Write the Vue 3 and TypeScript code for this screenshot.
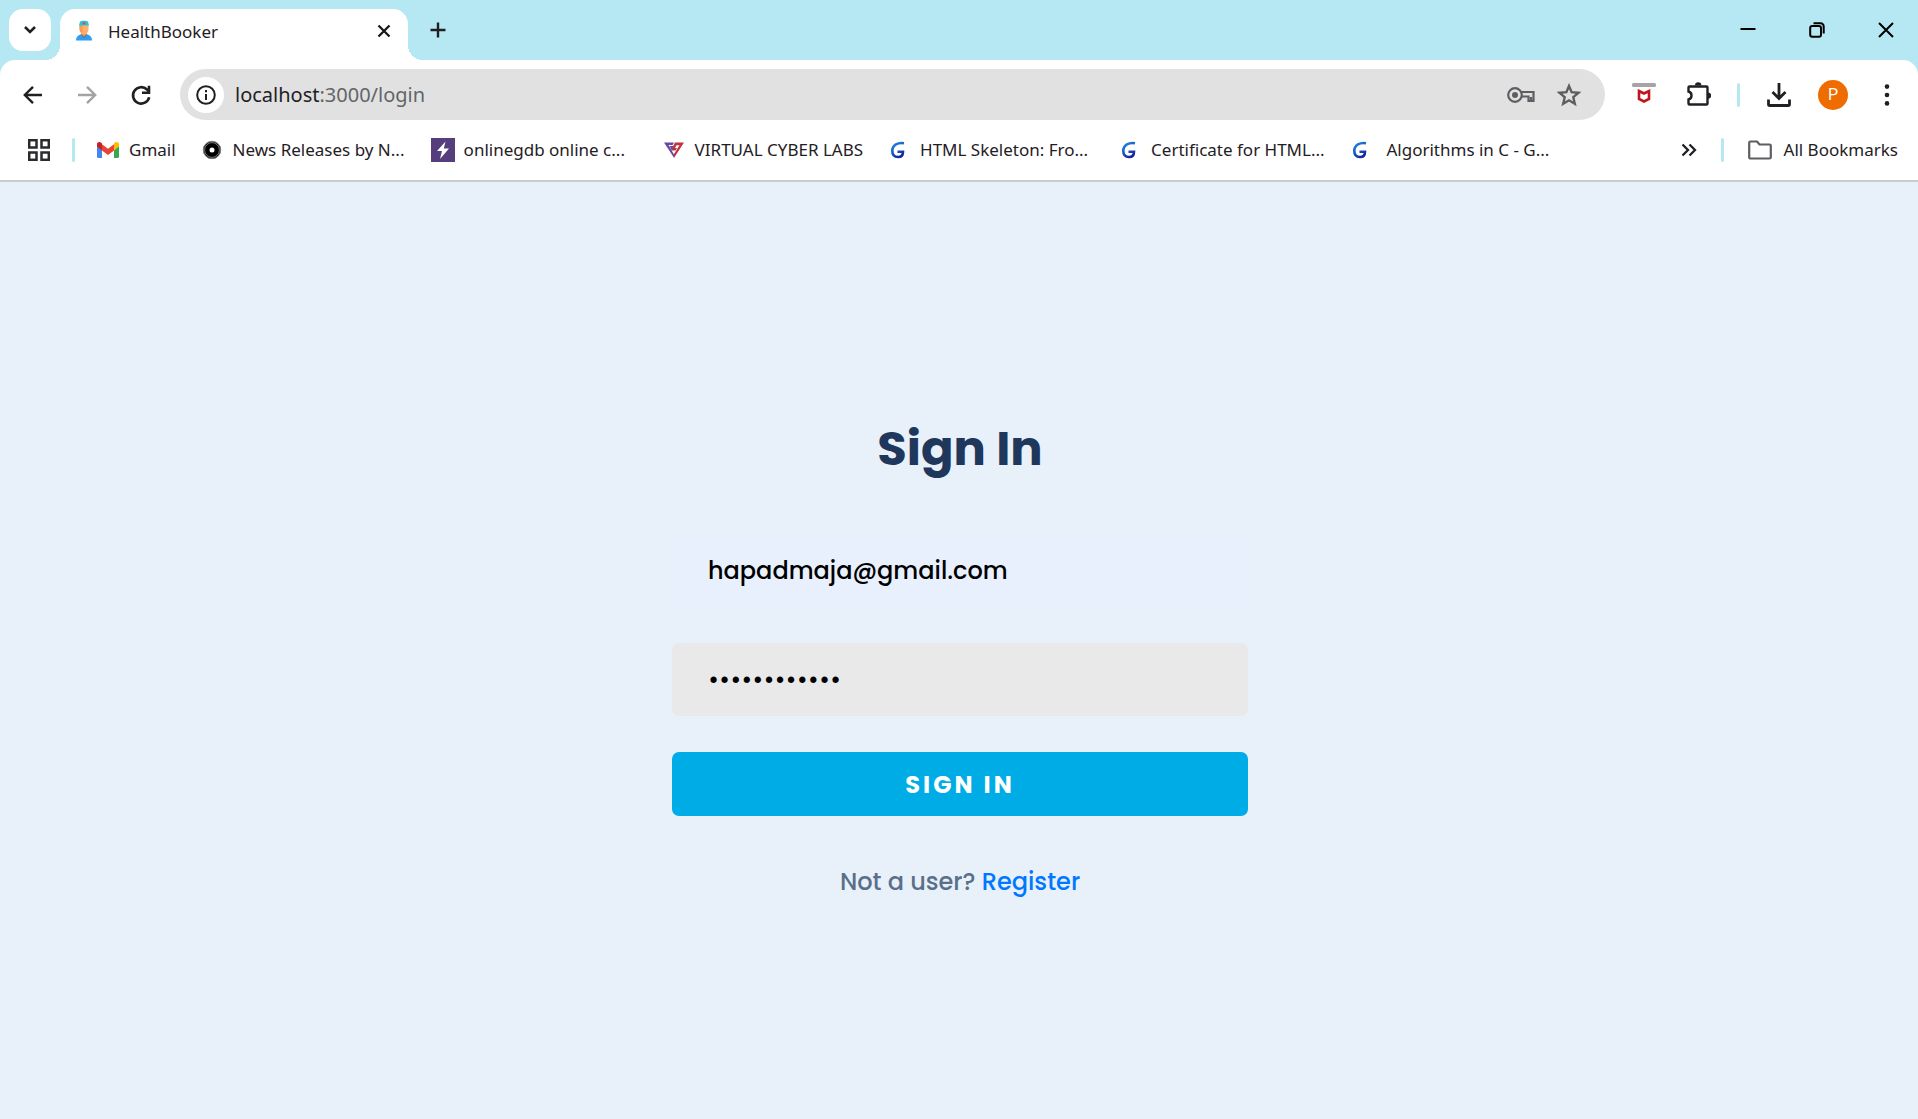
<script setup lang="ts">
import { ref } from 'vue'

type BookmarkIcon = 'gmail' | 'nasa' | 'gdb' | 'vcl' | 'gfg'

interface Bookmark {
  icon: BookmarkIcon
  label: string
  clipped: boolean
}

const bookmarks: Bookmark[] = [
  { icon: 'gmail', label: 'Gmail', clipped: false },
  { icon: 'nasa', label: 'News Releases by N...', clipped: true },
  { icon: 'gdb', label: 'onlinegdb online c...', clipped: true },
  { icon: 'vcl', label: 'VIRTUAL CYBER LABS', clipped: false },
  { icon: 'gfg', label: 'HTML Skeleton: Fro...', clipped: true },
  { icon: 'gfg', label: 'Certificate for HTML...', clipped: true },
  { icon: 'gfg', label: ' Algorithms in C - G...', clipped: true },
]

const email = ref('hapadmaja@gmail.com')
const password = ref('abcdefghijkl')
</script>

<template>
  <div class="browser">
    <header class="chrome">
      <div class="tabstrip">
        <button class="tab-search" type="button" aria-label="Search tabs">
          <svg width="14" height="10" viewBox="0 0 14 10"><path d="M2 2l5 5 5-5" fill="none" stroke="#1f2024" stroke-width="2.6" /></svg>
        </button>
        <div class="tab">
          <svg width="18" height="22" viewBox="0 0 18 22">
            <path d="M1 20.500c0-4 2.500-5.500 5-6h6c2.500.500 5 2 5 6z" fill="#2f9df4" />
            <path d="M6 12h6v3l-3 2.500L6 15z" fill="#f28b3c" />
            <path d="M4.500 5h9v4c0 3-2 5.500-4.500 5.500S4.500 12 4.500 9z" fill="#ffb070" />
            <path d="M4.500 5h3v8c-2-1-3-2.500-3-4z" fill="#f79a55" />
            <path d="M4 5.500L5 1.500C7 .500 11 .500 13 1.500l1 4z" fill="#27c3d8" />
            <path d="M9 1.800v3M7.500 3.300h3" stroke="#e8453c" stroke-width="1" />
            <path d="M6 14.500l3 3 3-3" fill="none" stroke="#1778d6" stroke-width="1" />
          </svg>
          <span class="tab-title">HealthBooker</span>
          <button class="plain" type="button" aria-label="Close tab">
            <svg width="14" height="14" viewBox="0 0 14 14"><path d="M1.500 1.500l11 11M12.500 1.500l-11 11" stroke="#17181b" stroke-width="2.300" /></svg>
          </button>
        </div>
        <button class="plain new-tab" type="button" aria-label="New tab">
          <svg width="16" height="16" viewBox="0 0 16 16"><path d="M8 0.500v15M0.500 8h15" stroke="#1f2024" stroke-width="2.400" /></svg>
        </button>
        <div class="window-controls">
          <button class="plain" type="button" aria-label="Minimize">
            <svg width="16" height="16" viewBox="0 0 16 16"><path d="M0.500 7h15" stroke="#000" stroke-width="2" /></svg>
          </button>
          <button class="plain" type="button" aria-label="Restore">
            <svg width="16" height="16" viewBox="0 0 16 16" fill="none" stroke="#000" stroke-width="2">
              <rect x="1.200" y="4" width="10.800" height="10.800" rx="2" />
              <path d="M4.500 1.300h7.200a3 3 0 0 1 3 3v7.200" />
            </svg>
          </button>
          <button class="plain" type="button" aria-label="Close">
            <svg width="16" height="16" viewBox="0 0 16 16"><path d="M1 1l14 14M15 1L1 15" stroke="#000" stroke-width="2" /></svg>
          </button>
        </div>
      </div>

      <div class="panel">
        <div class="toolbar">
          <button class="tool" type="button" aria-label="Back">
            <svg width="24" height="24" viewBox="0 0 24 24" fill="none" stroke="#1f2024" stroke-width="2.400"><path d="M21 12H4.500M12 3.800L3.800 12l8.200 8.200" /></svg>
          </button>
          <button class="tool" type="button" aria-label="Forward">
            <svg width="24" height="24" viewBox="0 0 24 24" fill="none" stroke="#a3a3a3" stroke-width="2.400"><path d="M3 12h16.500M12 3.800l8.200 8.200-8.200 8.200" /></svg>
          </button>
          <button class="tool" type="button" aria-label="Reload">
            <svg width="24" height="24" viewBox="0 0 24 24" fill="none" stroke="#1f2024" stroke-width="2.600"><path d="M20.200 14.300A8.200 8.200 0 1 1 18 6.500l1.800 2" /><path d="M20 2.800v6.900h-7" /></svg>
          </button>
          <div class="omnibox">
            <button class="site-info" type="button" aria-label="View site information">
              <svg width="20" height="20" viewBox="0 0 20 20"><circle cx="10" cy="10" r="8.800" fill="none" stroke="#1f2024" stroke-width="2" /><path d="M10 9v6M10 5v2.200" stroke="#1f2024" stroke-width="2" /></svg>
            </button>
            <div class="url"><span class="host">localhost</span>:3000/login</div>
            <button class="plain" type="button" aria-label="Passwords">
              <svg width="28" height="18" viewBox="0 0 28 18" fill="none" stroke="#5c5e61" stroke-width="2.200">
                <circle cx="8" cy="9" r="6.800" />
                <circle cx="8" cy="9" r="3" fill="#5c5e61" stroke="none" />
                <path d="M14 6h12.500v9h-5v-4.500h-7.500M24 11v4" />
              </svg>
            </button>
            <button class="plain" type="button" aria-label="Bookmark this tab">
              <svg width="24" height="24" viewBox="0 0 24 24" fill="none" stroke="#5c5e61" stroke-width="2.400"><path d="M12 3l2.600 6.200 6.800.600-5.100 4.400 1.500 6.600L12 17.300l-5.800 3.500 1.500-6.600-5.100-4.400 6.800-.600z" /></svg>
            </button>
          </div>
          <button class="tool" type="button" aria-label="McAfee WebAdvisor">
            <svg width="24" height="24" viewBox="0 0 24 24"><rect y="0" width="24" height="4" rx="1.500" fill="#a6a4a4" /><path d="M7 8l5 2.500L17 8v8l-5 2.500L7 16z" fill="none" stroke="#c0151c" stroke-width="2.600" /></svg>
          </button>
          <button class="tool" type="button" aria-label="Extensions">
            <svg width="26" height="26" viewBox="0 0 26 26">
              <path d="M4.500 4.500h17a1 1 0 0 1 1 1v16a1 1 0 0 1-1 1h-17a1 1 0 0 1-1-1v-4c4-1 4-7 0-8v-4a1 1 0 0 1 1-1z" fill="none" stroke="#1f2024" stroke-width="2.400" />
              <path d="M10 3.500a3.200 3.200 0 0 1 6.400 0zM23 10.500a3.200 3.200 0 0 1 0 6.400z" fill="#1f2024" />
            </svg>
          </button>
          <span class="divider toolbar-divider"></span>
          <button class="tool" type="button" aria-label="Downloads">
            <svg width="24" height="26" viewBox="0 0 24 26" fill="none" stroke="#1f2024" stroke-width="2.800"><path d="M12 1v15M5.500 10L12 16.500l6.500-6.500" /><path d="M1.500 17.500v4.800a1.200 1.200 0 0 0 1.200 1.200h18.600a1.200 1.200 0 0 0 1.200-1.200v-4.800" /></svg>
          </button>
          <button class="tool" type="button" aria-label="Profile"><span class="avatar">P</span></button>
          <button class="tool" type="button" aria-label="Menu">
            <svg width="6" height="22" viewBox="0 0 6 22" fill="#1f2024"><circle cx="3" cy="2.600" r="2.300" /><circle cx="3" cy="11" r="2.300" /><circle cx="3" cy="19.400" r="2.300" /></svg>
          </button>
        </div>

        <nav class="bookmarks" aria-label="Bookmarks">
          <button class="plain" type="button" aria-label="Apps">
            <svg width="22" height="22" viewBox="0 0 22 22" fill="none" stroke="#2a2b2e" stroke-width="2.500"><rect x="1.200" y="1.200" width="7.300" height="7.300" /><rect x="13.500" y="1.200" width="7.300" height="7.300" /><rect x="1.200" y="13.500" width="7.300" height="7.300" /><rect x="13.500" y="13.500" width="7.300" height="7.300" /></svg>
          </button>
          <span class="divider"></span>
          <div class="bookmark-list">
            <a v-for="item in bookmarks" :key="item.label" class="bookmark" href="#">
              <svg v-if="item.icon === 'gmail'" width="24" height="24" viewBox="0 0 24 24">
                <path d="M1 6.500v12A1.500 1.500 0 0 0 2.500 20H6V10z" fill="#4285f4" />
                <path d="M23 6.500v12a1.500 1.500 0 0 1-1.500 1.500H18V10z" fill="#34a853" />
                <path d="M6 6.200l6 4.600 6-4.600v6.200L12 17l-6-4.600z" fill="#ea4335" />
                <path d="M1 8.500V6.200C1 4 3.500 3.200 5 4.600l1 .800v7z" fill="#c5221f" />
                <path d="M23 8.500V6.200c0-2.200-2.500-3-4-1.600l-1 .800v7z" fill="#fbbc04" />
              </svg>
              <svg v-else-if="item.icon === 'nasa'" width="24" height="24" viewBox="0 0 24 24">
                <circle cx="12" cy="12" r="8.700" fill="#000" stroke="#777" stroke-width="1" /><circle cx="12" cy="12" r="7.400" fill="none" stroke="#aaa" stroke-width="0.700" /><circle cx="12" cy="12" r="2.500" fill="#fff" />
              </svg>
              <svg v-else-if="item.icon === 'gdb'" width="24" height="24" viewBox="0 0 24 24">
                <rect width="24" height="24" fill="#563d7c" /><path d="M14.500 3.500L6 13h5l-2 8 9-10.500h-5.200z" fill="#fff" />
              </svg>
              <svg v-else-if="item.icon === 'vcl'" width="24" height="24" viewBox="0 0 24 24">
                <path d="M2 4.500h10L10.500 7H6.500l5.500 9.500v3.300z" fill="#6846a5" />
                <path d="M13 4.500h9L12 20v-4l5.500-8.700h-3l-1.500 2.700h2l-1.500 2.500H9z" fill="#bd3540" />
                <path d="M7.500 8h4l-1.800 4z" fill="#6846a5" />
              </svg>
              <svg v-else width="24" height="24" viewBox="0 0 24 24">
                <defs><linearGradient id="gfg-blue" x1="0" y1="0" x2="0.600" y2="1"><stop offset="0" stop-color="#1f8fe5" /><stop offset="1" stop-color="#1429a0" /></linearGradient></defs>
                <path d="M17 5.200C11 4.200 5.300 7 5.300 13c0 4 2.400 6 5.700 6 3.400 0 5-2.200 5-5.300h-5.500" fill="none" stroke="url(#gfg-blue)" stroke-width="2.600" />
              </svg>
              <span class="bookmark-label" :class="{ clipped: item.clipped }">{{ item.label }}</span>
            </a>
          </div>
          <button class="plain more" type="button" aria-label="More bookmarks">
            <svg width="16" height="14" viewBox="0 0 16 14" fill="none" stroke="#1f2024" stroke-width="2.300"><path d="M1.500 1.500L7 7l-5.500 5.500M8.500 1.500L14 7l-5.500 5.500" /></svg>
          </button>
          <span class="divider"></span>
          <a class="bookmark all-bookmarks" href="#">
            <svg width="24" height="20" viewBox="0 0 24 20" fill="none" stroke="#5c5e61" stroke-width="2.200"><path d="M2.500 1.500h6.500l2.500 3h10a1.300 1.300 0 0 1 1.300 1.300v11.400a1.300 1.300 0 0 1-1.300 1.300h-19a1.300 1.300 0 0 1-1.300-1.300V2.800a1.300 1.300 0 0 1 1.300-1.300z" /></svg>
            <span class="bookmark-label">All Bookmarks</span>
          </a>
        </nav>
      </div>
    </header>

    <main class="page">
      <h1 class="heading">Sign In</h1>
      <form class="form" @submit.prevent>
        <input v-model="email" class="field autofilled" type="email" aria-label="Email" autocomplete="off" />
        <input v-model="password" class="field" type="password" aria-label="Password" autocomplete="off" />
        <button class="submit" type="submit">SIGN IN</button>
      </form>
      <p class="footnote">Not a user? <a class="register" href="#">Register</a></p>
    </main>
  </div>
</template>

<style>
body {
  background: #e8f1fa;
}
</style>

<style scoped>
* {
  box-sizing: border-box;
}

.browser {
  min-height: 100vh;
  display: flex;
  flex-direction: column;
  font-family: "Segoe UI", "Noto Sans", sans-serif;
  color: #1f2024;
}

button {
  font: inherit;
  color: inherit;
  border: 0;
  padding: 0;
  background: none;
  cursor: pointer;
}

svg {
  display: block;
  flex: none;
}

.chrome {
  background: #b6e8f3;
}

.tabstrip {
  display: flex;
  height: 60px;
  padding-left: 9px;
}

.tab-search {
  display: flex;
  align-items: center;
  justify-content: center;
  width: 42px;
  height: 42px;
  margin-top: 9px;
  border-radius: 14px;
  background: #fff;
}

.tab {
  position: relative;
  display: flex;
  align-items: center;
  width: 348px;
  margin: 9px 0 0 9px;
  padding: 0 17px 8px 15px;
  border-radius: 15px 15px 0 0;
  background: #fff;
}

.tab::before,
.tab::after {
  content: "";
  position: absolute;
  bottom: 0;
  width: 15px;
  height: 15px;
}

.tab::before {
  right: 100%;
  background: radial-gradient(circle at 0 0, transparent 15px, #fff 15px);
}

.tab::after {
  left: 100%;
  background: radial-gradient(circle at 100% 0, transparent 15px, #fff 15px);
}

.tab-title {
  flex: 1;
  margin-left: 15px;
  padding-top: 2px;
  font-size: 17px;
  line-height: 24px;
}

.new-tab {
  margin-left: 22px;
}

.window-controls {
  display: flex;
  gap: 53px;
  margin-left: auto;
  padding-right: 24px;
}

.panel {
  border-radius: 15px 15px 0 0;
  border-bottom: 2px solid #c9cbcd;
  background: #fff;
}

.toolbar {
  display: flex;
  align-items: center;
  padding: 9px 4px 0 6px;
}

.tool {
  display: flex;
  align-items: center;
  justify-content: center;
  width: 54px;
  height: 51px;
}

.omnibox {
  display: flex;
  flex: 1;
  align-items: center;
  gap: 22px;
  height: 51px;
  margin: 0 12px;
  padding: 0 24px 0 8px;
  border-radius: 26px;
  background: #e1e1e1;
}

.site-info {
  display: flex;
  align-items: center;
  justify-content: center;
  width: 36px;
  height: 36px;
  border-radius: 50%;
  background: #fff;
}

.url {
  flex: 1;
  margin-left: -11px;
  font-size: 20px;
  line-height: 28px;
  color: #626569;
}

.host {
  color: #1f2024;
}

.divider {
  width: 3px;
  height: 24px;
  border-radius: 2px;
  background: #b6e8f3;
}

.toolbar-divider {
  margin: 0 12px;
}

.avatar {
  width: 30px;
  height: 30px;
  border-radius: 50%;
  background: #ef6c00;
  color: #fff;
  font-family: Roboto, sans-serif;
  font-size: 16px;
  line-height: 30px;
  text-align: center;
}

.bookmarks {
  display: flex;
  align-items: center;
  height: 60px;
  padding: 0 20px 0 28px;
}

.bookmarks > .divider:nth-child(2) {
  margin: 0 21px 0 22px;
}

.bookmark-list {
  display: flex;
  gap: 24px;
}

.bookmark {
  display: flex;
  align-items: center;
  gap: 9px;
  color: inherit;
  text-decoration: none;
}

.bookmark-label {
  font-size: 17px;
  line-height: 24px;
  white-space: pre;
}

.clipped {
  width: 174px;
}

.more {
  margin-left: auto;
  margin-right: 24px;
}

.all-bookmarks {
  gap: 12px;
  margin-left: 24px;
}

.page {
  flex: 1;
  display: flex;
  flex-direction: column;
  align-items: center;
  padding: 231px 24px 48px 26px;
  background: #e8f1fa;
  font-family: Poppins, Inter, sans-serif;
}

.heading {
  margin: 0 0 49px;
  font-size: 48px;
  font-weight: 700;
  line-height: 72px;
  color: #1e375a;
}

.form {
  display: flex;
  flex-direction: column;
  gap: 36px;
  width: 576px;
  max-width: 100%;
}

.field {
  width: 100%;
  height: 73px;
  padding: 0 36px;
  border: 0;
  border-radius: 7px;
  outline: 0;
  background: #e9e9e9;
  color: #000;
  font-family: inherit;
  font-size: 24px;
  font-weight: 500;
}

.autofilled {
  background: #e8f0fe;
}

.submit {
  height: 64px;
  border-radius: 7px;
  background: #00ace6;
  color: #fff;
  font-size: 24px;
  font-weight: 700;
  letter-spacing: 3px;
}

.footnote {
  margin: 48px 0 0;
  font-size: 24px;
  font-weight: 500;
  line-height: 36px;
  color: #5a6f8a;
}

.register {
  color: #0077ff;
  text-decoration: none;
}
</style>
